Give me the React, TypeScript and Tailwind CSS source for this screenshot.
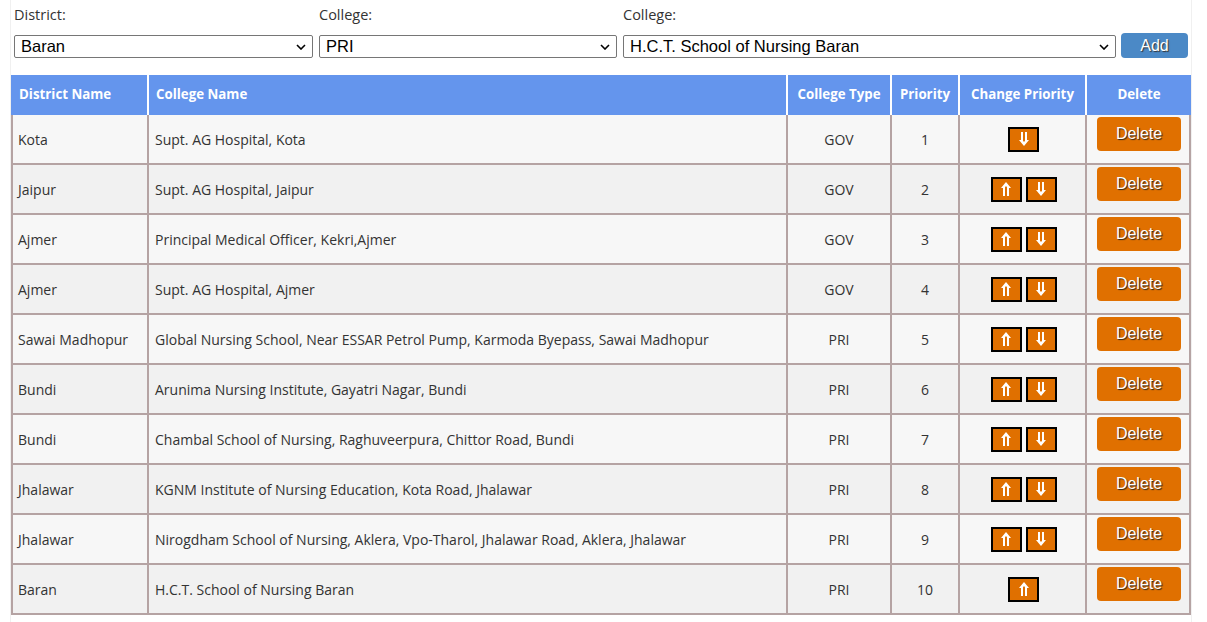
import React from 'react';

type Row = { district: string; college: string; type: string; priority: number };

const rows: Row[] = [
    { district: 'Kota', college: 'Supt. AG Hospital, Kota', type: 'GOV', priority: 1 },
    { district: 'Jaipur', college: 'Supt. AG Hospital, Jaipur', type: 'GOV', priority: 2 },
    { district: 'Ajmer', college: 'Principal Medical Officer, Kekri,Ajmer', type: 'GOV', priority: 3 },
    { district: 'Ajmer', college: 'Supt. AG Hospital, Ajmer', type: 'GOV', priority: 4 },
    {
        district: 'Sawai Madhopur',
        college: 'Global Nursing School, Near ESSAR Petrol Pump, Karmoda Byepass, Sawai Madhopur',
        type: 'PRI',
        priority: 5,
    },
    { district: 'Bundi', college: 'Arunima Nursing Institute, Gayatri Nagar, Bundi', type: 'PRI', priority: 6 },
    { district: 'Bundi', college: 'Chambal School of Nursing, Raghuveerpura, Chittor Road, Bundi', type: 'PRI', priority: 7 },
    { district: 'Jhalawar', college: 'KGNM Institute of Nursing Education, Kota Road, Jhalawar', type: 'PRI', priority: 8 },
    {
        district: 'Jhalawar',
        college: 'Nirogdham School of Nursing, Aklera, Vpo-Tharol, Jhalawar Road, Aklera, Jhalawar',
        type: 'PRI',
        priority: 9,
    },
    { district: 'Baran', college: 'H.C.T. School of Nursing Baran', type: 'PRI', priority: 10 },
];

const cols = 'grid grid-cols-[138px_639px_104px_68px_127px_104px]';

export default function App() {
    return (
        <div className="min-h-[622px] w-full bg-white font-['Open_Sans',sans-serif] text-[#333]">
            <div className="ml-[10px] min-h-[622px] w-[1182px] border-x border-[#f0f0f0]">
                <div className="flex items-end gap-[6px] pl-[3px] pt-[5px]">
                    <Field label="District:" value="Baran" width="w-[299px]" />
                    <Field label="College:" value="PRI" width="w-[298px]" />
                    <Field label="College:" value="H.C.T. School of Nursing Baran" width="w-[493px]" />
                    <button className="ml-[-1px] h-[25px] w-[67px] rounded-[4px] bg-[#4b89c6] font-['Liberation_Sans',sans-serif] text-[16px] leading-none text-white [text-shadow:1px_1px_1px_#333]">
                        Add
                    </button>
                </div>

                <div className="mt-[17px] w-[1180px]">
                    <div className={`${cols} h-[40px] bg-[#6495ed] text-[13.3px] font-bold text-white`}>
                        <HeadCell className="justify-start pl-[8px]">District Name</HeadCell>
                        <HeadCell className="justify-start pl-[7px]">College Name</HeadCell>
                        <HeadCell>College Type</HeadCell>
                        <HeadCell>Priority</HeadCell>
                        <HeadCell>Change Priority</HeadCell>
                        <HeadCell last>Delete</HeadCell>
                    </div>
                    {rows.map((r, i) => (
                        <div
                            key={r.priority}
                            className={`${cols} h-[50px] text-[14px] ${i % 2 === 0 ? 'bg-[#f7f7f7]' : 'bg-[#f1f1f1]'}`}
                        >
                            <Cell className="border-l-2 justify-start pl-[5px]">{r.district}</Cell>
                            <Cell className="justify-start pl-[6px]">{r.college}</Cell>
                            <Cell>{r.type}</Cell>
                            <Cell>{r.priority}</Cell>
                            <Cell className="gap-[4px] pl-[2px]">
                                {i > 0 && <ArrowButton dir="up" />}
                                {i < rows.length - 1 && <ArrowButton dir="down" />}
                            </Cell>
                            <div className="flex justify-center border-b-2 border-r-2 border-[#b5a3a3] pl-[2px] pt-[2px]">
                                <button className="h-[34px] w-[84px] rounded-[4px] bg-[#e07000] font-['Liberation_Sans',sans-serif] text-[16px] leading-none text-white [text-shadow:1px_1px_1px_#222]">
                                    Delete
                                </button>
                            </div>
                        </div>
                    ))}
                </div>
            </div>
        </div>
    );
}

function Field(props: { label: string; value: string; width: string }) {
    return (
        <div className="flex flex-col">
            <label className="mb-[10px] text-[14.5px] leading-[20px] text-[#333]">{props.label}</label>
            <div
                className={`${props.width} flex h-[23px] items-center justify-between rounded-[2px] border border-[#767676] bg-white pl-[6px] pr-[6px] font-['Liberation_Sans',sans-serif] text-[16.5px] text-black`}
            >
                <span>{props.value}</span>
                <svg width="10" height="6" viewBox="0 0 10 6" fill="none">
                    <path d="M1 1l4 4 4-4" stroke="#000" strokeWidth="1.6" />
                </svg>
            </div>
        </div>
    );
}

function HeadCell(props: { children: React.ReactNode; className?: string; last?: boolean }) {
    return (
        <div
            className={`flex items-center justify-center ${props.last ? '' : 'border-r-2 border-white'} ${props.className ?? ''}`}
        >
            {props.children}
        </div>
    );
}

function Cell(props: { children?: React.ReactNode; className?: string }) {
    return (
        <div
            className={`flex items-center justify-center border-b-2 border-r-2 border-[#b5a3a3] ${props.className ?? ''}`}
        >
            {props.children}
        </div>
    );
}

function ArrowButton(props: { dir: 'up' | 'down' }) {
    return (
        <span className="flex h-[25px] w-[31px] items-center justify-center border-2 border-black bg-[#e07000]">
            <svg
                width="10"
                height="14"
                viewBox="0 0 10 14"
                className={props.dir === 'down' ? 'rotate-180' : ''}
            >
                <path d="M5 0L10 6H8V14H6V5.2L5 4L4 5.2V14H2V6H0Z" fill="#fff" />
            </svg>
        </span>
    );
}
